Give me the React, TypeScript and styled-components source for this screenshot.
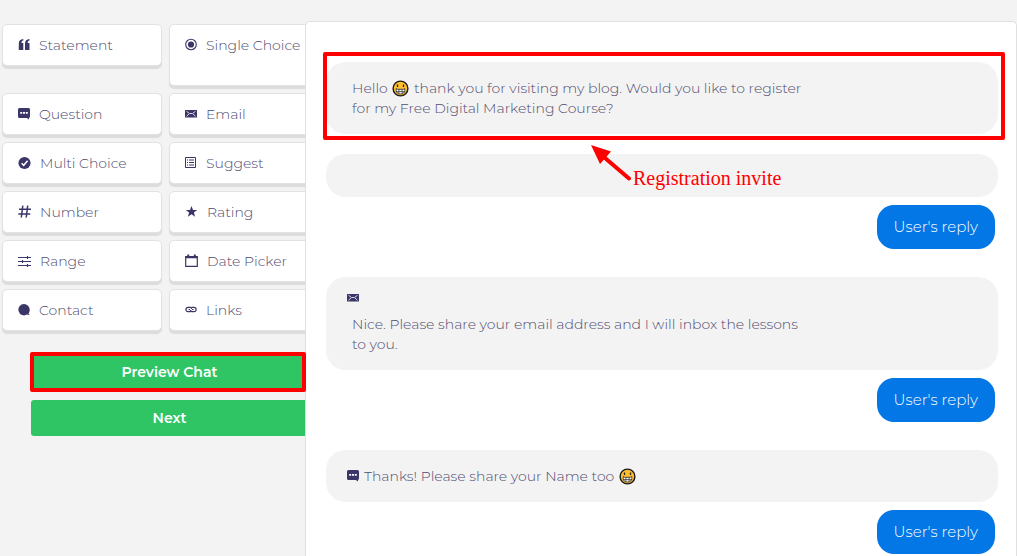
import React from "react";
import styled, { createGlobalStyle } from "styled-components";

const GlobalStyle = createGlobalStyle`
  * { box-sizing: border-box; }
  body { margin: 0; background: #f3f3f3; }
  button { font: inherit; }
`;

const INK = "#3b3668";
const TEXT = "#504c70";

const Page = styled.div`
  display: flex;
  height: 100vh;
  padding-top: 21px;
  overflow: hidden;
  background: #f3f3f3;
  color: ${TEXT};
  font-family: Montserrat, Inter, sans-serif;
  font-size: 14px;
  font-weight: 300;
  line-height: 20px;
`;

const Sidebar = styled.aside`
  flex: 0 0 305px;
  min-width: 0;
  padding: 3px 0 0 2px;
`;

const BlockGrid = styled.div`
  display: grid;
  grid-template-columns: 160px 160px;
  gap: 7px;
  align-items: start;
`;

const BlockCard = styled.button<{ $tall?: boolean }>`
  display: flex;
  align-items: flex-start;
  gap: 9px;
  height: ${(p) => (p.$tall ? 62 : 42)}px;
  padding: 10px 0 0 15px;
  border: 1px solid #e2e2e2;
  border-radius: 5px;
  background: #fff;
  box-shadow: 0 3px 1px #dcdcdc;
  color: inherit;
  line-height: 20px;
  text-align: left;
  white-space: nowrap;
  cursor: pointer;
`;

const Icon = styled.svg`
  flex: none;
  display: block;
  height: 20px;
`;

const Actions = styled.div`
  display: grid;
  gap: 10px;
  width: 277px;
  margin: 23px 0 0 29px;
`;

const ActionSlot = styled.div`
  position: relative;
`;

const ActionButton = styled.button`
  display: block;
  width: 100%;
  height: 36px;
  border: 0;
  border-radius: 3px;
  background: #2fc565;
  color: #fff;
  font-size: 14px;
  font-weight: 600;
  cursor: pointer;
`;

const Highlight = styled.div<{ $inset: string }>`
  position: absolute;
  z-index: 2;
  inset: ${(p) => p.$inset};
  border: 4px solid #f00;
  border-radius: 2px;
  pointer-events: none;
`;

const ChatPanel = styled.main`
  position: relative;
  flex: 1;
  min-width: 0;
  padding: 40px 18px 28px 20px;
  border: 1px solid #e0e0e0;
  border-bottom: 0;
  border-radius: 5px 5px 0 0;
  background: #fff;
  overflow: hidden;
`;

const Exchange = styled.section`
  display: flex;
  flex-direction: column;
  gap: 8px;
  margin-bottom: 28px;
`;

const Bubble = styled.div<{ $spaced?: boolean }>`
  position: relative;
  min-height: 43px;
  padding: 16px 21px;
  margin-bottom: ${(p) => (p.$spaced ? 20 : 0)}px;
  border-radius: 20px;
  background: #f3f3f3;
`;

const Message = styled.p`
  max-width: 460px;
  margin: 0;
  padding-left: 5px;
`;

const IconRow = styled.div`
  display: flex;
  align-items: center;
  height: 10px;
  margin-bottom: 11px;
`;

const InlineMessage = styled.p`
  display: flex;
  align-items: center;
  gap: 5px;
  margin: 0;
`;

const Reply = styled.div`
  align-self: flex-end;
  height: 44px;
  margin-right: 3px;
  padding: 12px 17px;
  border-radius: 17px;
  background: #0277e5;
  color: #fff;
  font-size: 15px;
`;

const Annotation = styled.div`
  position: absolute;
  left: 265px;
  top: -9px;
  display: flex;
  align-items: flex-end;
  gap: 2px;
  color: #f00;
  font: 20px/22px "Liberation Serif", serif;
  white-space: nowrap;
`;

const Emoji = styled.svg`
  display: inline-block;
  margin: 0 1px;
  vertical-align: -4px;
`;

const GrinFace = () => (
  <Emoji width="17" height="17" viewBox="0 0 17 17" role="img" aria-label="Grinning face">
    <circle cx="8.5" cy="8.5" r="7.4" fill="#fdbf2d" stroke="#1b1b1b" strokeWidth="1.400" />
    <path d="M5.500 4.500v2.500M11.500 4.500v2.500" fill="none" stroke="#222" strokeWidth="1.300" />
    <path d="M4.200 8.500 5.500 9.300h6L12.800 8.500v2c0 2-1.800 3.500-4.300 3.500S4.200 12.600 4.200 10.600z" fill="#fff" stroke="#333" strokeWidth=".9" />
    <path d="M4.500 11.600h8M6.900 9.500v4M10.100 9.500v4" stroke="#333" strokeWidth=".8" />
  </Emoji>
);

type IconName =
  | "quote" | "radio" | "question" | "email" | "check" | "list"
  | "hash" | "star" | "range" | "calendar" | "contact" | "link";

const shapes: Record<IconName, React.ReactNode> = {
  quote: (
    <path fill={INK} d="M5.300 4V5.500C4 5.800 3.500 6.700 3.500 8H5.300v7H.8V8.400C.8 5.800 2.400 4.200 5.300 4zM11.500 4V5.500C10.200 5.800 9.700 6.700 9.700 8h1.800v7H7V8.400C7 5.800 8.600 4.200 11.500 4z" />
  ),
  radio: (
    <>
      <circle cx="6" cy="9.500" r="5.300" fill="none" stroke={INK} strokeWidth="1.100" />
      <circle cx="6" cy="9.500" r="3.100" fill={INK} />
    </>
  ),
  question: (
    <>
      <path fill={INK} d="M1.500 4h9A1.500 1.500 0 0 1 12 5.500V12.500A1.500 1.500 0 0 1 11 13.900V15.600L8.800 14H1.500A1.500 1.500 0 0 1 0 12.500V5.500A1.500 1.500 0 0 1 1.500 4z" />
      <path fill="#fff" d="M2.200 8h2v1.800h-2zM5 8h2v1.800H5zM7.800 8h2v1.800h-2z" />
    </>
  ),
  email: (
    <>
      <path fill={INK} d="M0 6h12v7.500H0z" />
      <path d="M1.500 7.300 4.500 9.500h3L10.500 7.300M1.500 12.300 4 10M10.500 12.300 8 10" fill="none" stroke="#fff" strokeWidth=".8" />
    </>
  ),
  check: (
    <>
      <circle cx="6.500" cy="10" r="6.100" fill={INK} />
      <path d="M3.600 10.200 5.700 12.300 9.600 7.800" fill="none" stroke="#fff" strokeWidth="1.500" />
    </>
  ),
  list: (
    <>
      <path d="M.5 4.500h10v10H.5z" fill="none" stroke={INK} />
      <path d="M2 7h1M2 9.500h1M2 12h1M4 7h5M4 9.500h5M4 12h5" stroke={INK} />
    </>
  ),
  hash: (
    <path d="M4.800 3.700 3.300 15.500M9.700 3.700 8.200 15.500M1 7.300h12M.3 11.900h12" fill="none" stroke={INK} strokeWidth="1.500" />
  ),
  star: (
    <path fill={INK} d="m6.500 4 1.500 4h4.200L8.900 10.500l1.200 4.200-3.600-2.500-3.600 2.500 1.200-4.200L.8 8H5z" />
  ),
  range: (
    <path d="M0 6.500h13M0 10.500h13M0 14.500h13M9.500 5v3M4.500 9v3M9.500 13v3" fill="none" stroke={INK} strokeWidth="1.100" />
  ),
  calendar: (
    <>
      <path d="M.7 5.500h11.600v9.800H.7z" fill="none" stroke={INK} strokeWidth="1.200" />
      <path d="M.7 6.300h11.600M3.200 3.500v3M9.800 3.500v3" stroke={INK} strokeWidth="2" />
    </>
  ),
  contact: (
    <path fill={INK} d="M6 4a5.700 5.700 0 0 1 5.700 5.700c0 1.600-.5 2.900-1.200 3.900l1.200 1.700-2.700-.7A5.700 5.700 0 1 1 6 4z" />
  ),
  link: (
    <path d="M5.500 11.600H3a2.100 2.100 0 0 1 0-4.200H5.500Q6.500 7.500 6.500 9M6.500 7.400H9a2.100 2.100 0 0 1 0 4.200H7.500Q5.500 11.600 5.500 10M3.500 9.500H5M7 9.500H8.500" fill="none" stroke={INK} strokeWidth="1.200" />
  ),
};

const BlockIcon = ({ name, width = 12 }: { name: IconName; width?: number }) => (
  <Icon width={width} height="20" viewBox={`0 0 ${width} 20`} aria-hidden="true">
    {shapes[name]}
  </Icon>
);

const blocks: { label: string; icon: IconName; width?: number; tall?: boolean }[] = [
  { label: "Statement", icon: "quote" },
  { label: "Single Choice", icon: "radio", tall: true },
  { label: "Question", icon: "question" },
  { label: "Email", icon: "email" },
  { label: "Multi Choice", icon: "check", width: 13 },
  { label: "Suggest", icon: "list" },
  { label: "Number", icon: "hash", width: 13 },
  { label: "Rating", icon: "star", width: 13 },
  { label: "Range", icon: "range", width: 13 },
  { label: "Date Picker", icon: "calendar", width: 13 },
  { label: "Contact", icon: "contact" },
  { label: "Links", icon: "link" },
];

export default function App() {
  return (
    <>
      <GlobalStyle />
      <Page>
        <Sidebar>
          <BlockGrid>
            {blocks.map((b) => (
              <BlockCard key={b.label} type="button" $tall={b.tall}>
                <BlockIcon name={b.icon} width={b.width} />
                {b.label}
              </BlockCard>
            ))}
          </BlockGrid>
          <Actions>
            <ActionSlot>
              <ActionButton type="button">Preview Chat</ActionButton>
              <Highlight $inset="-2px 2px -2px -1px" />
            </ActionSlot>
            <ActionButton type="button">Next</ActionButton>
          </Actions>
        </Sidebar>
        <ChatPanel>
          <Bubble $spaced>
            <Message>
              Hello <GrinFace /> thank you for visiting my blog. Would you like to register for my
              Free Digital Marketing Course?
            </Message>
            <Highlight $inset="-10px -7px -6px -3px" />
          </Bubble>
          <Exchange>
            <Bubble>
              <Annotation>
                <svg width="40" height="44" viewBox="0 0 40 44" aria-hidden="true">
                  <path d="M14 13 38 33.500" stroke="#f00" strokeWidth="4" strokeLinecap="round" />
                  <path d="M0 0 20 6.500 9 19z" fill="#f00" />
                </svg>
                Registration invite
              </Annotation>
            </Bubble>
            <Reply>User's reply</Reply>
          </Exchange>
          <Exchange>
            <Bubble>
              <IconRow>
                <BlockIcon name="email" />
              </IconRow>
              <Message>
                Nice. Please share your email address and I will inbox the lessons to you.
              </Message>
            </Bubble>
            <Reply>User's reply</Reply>
          </Exchange>
          <Exchange>
            <Bubble>
              <InlineMessage>
                <BlockIcon name="question" />
                <span>
                  Thanks! Please share your Name too <GrinFace />
                </span>
              </InlineMessage>
            </Bubble>
            <Reply>User's reply</Reply>
          </Exchange>
        </ChatPanel>
      </Page>
    </>
  );
}
